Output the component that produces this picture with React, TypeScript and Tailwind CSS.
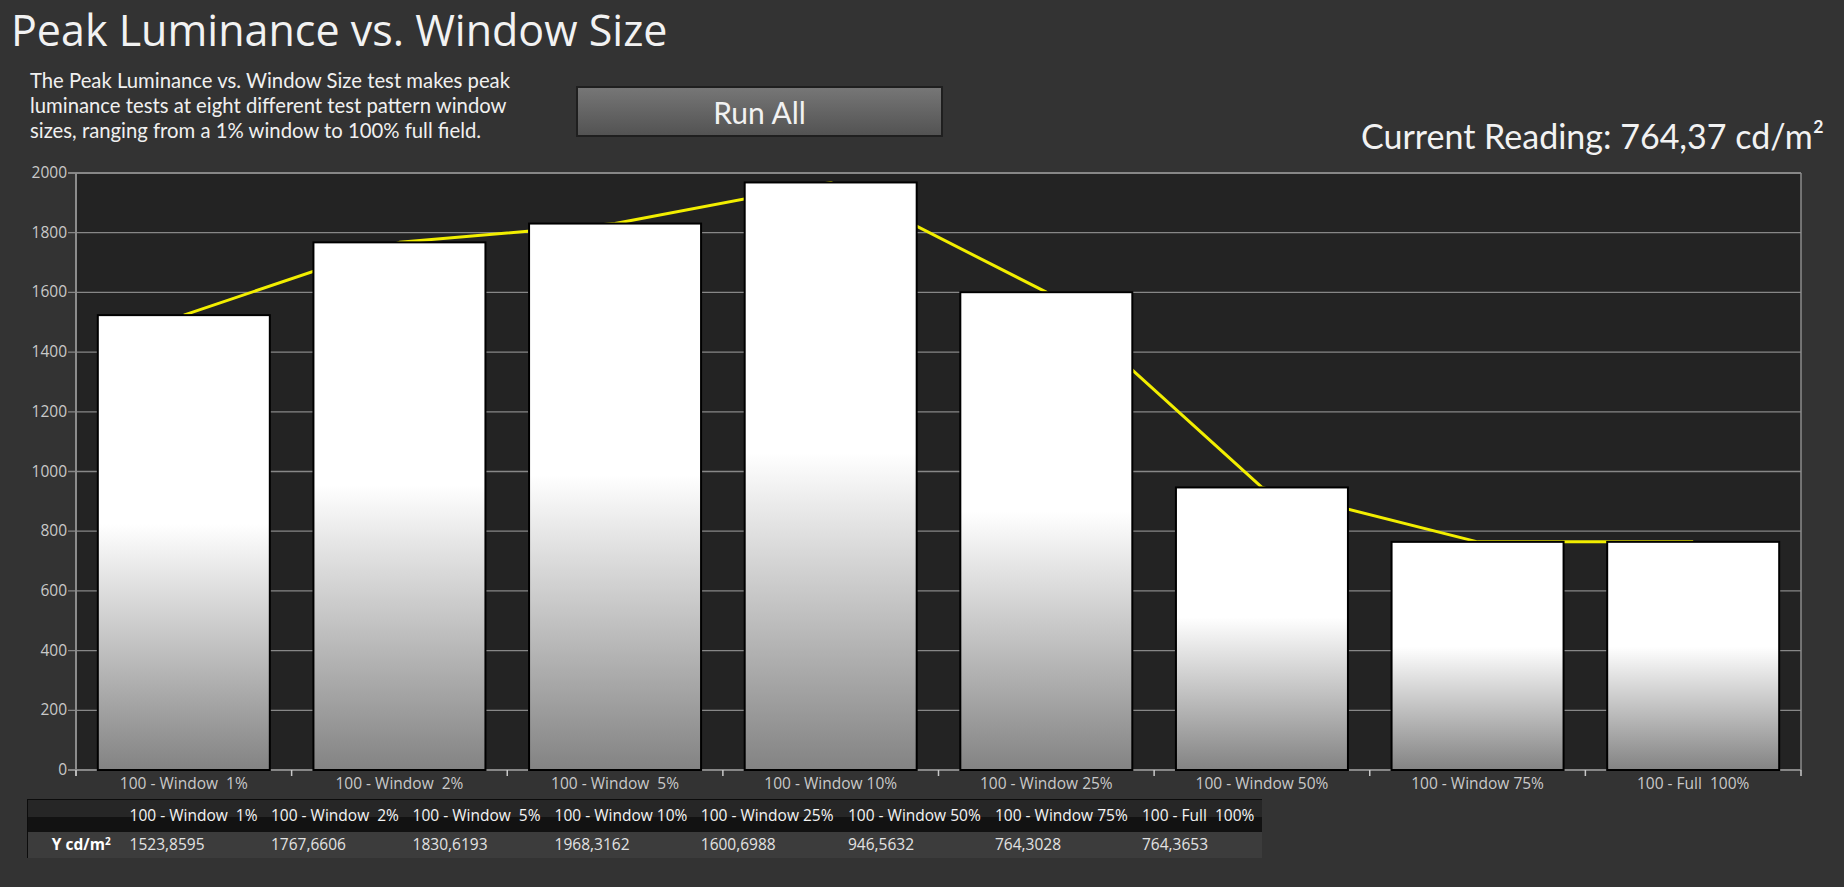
import React from "react";

const categories = [
  "100 - Window  1%",
  "100 - Window  2%",
  "100 - Window  5%",
  "100 - Window 10%",
  "100 - Window 25%",
  "100 - Window 50%",
  "100 - Window 75%",
  "100 - Full  100%",
];

const values = [1523.8595, 1767.6606, 1830.6193, 1968.3162, 1600.6988, 946.5632, 764.3028, 764.3653];

const PLOT_LEFT = 76;
const PLOT_RIGHT = 1801;
const PLOT_TOP = 13;
const PLOT_BOTTOM = 610;
const SLOT = (PLOT_RIGHT - PLOT_LEFT) / 8;
const K = (PLOT_BOTTOM - PLOT_TOP) / 2000;

const centerX = (i: number) => PLOT_LEFT + (i + 0.5) * SLOT;
const valueY = (v: number) => PLOT_BOTTOM - v * K;

const LuminanceChart = () => {
  const ticks = [0, 200, 400, 600, 800, 1000, 1200, 1400, 1600, 1800, 2000];
  const linePoints = values.map((v, i) => `${centerX(i)},${valueY(v)}`).join(" ");

  return (
    <svg width={1844} height={639} viewBox="0 0 1844 639" className="block">
      <defs>
        <linearGradient id="barFill" x1="0" y1="0" x2="0" y2="1">
          <stop offset="0" stopColor="#ffffff" />
          <stop offset="0.46" stopColor="#ffffff" />
          <stop offset="1" stopColor="#838383" />
        </linearGradient>
      </defs>

      <rect x={PLOT_LEFT} y={PLOT_TOP} width={PLOT_RIGHT - PLOT_LEFT} height={PLOT_BOTTOM - PLOT_TOP} fill="#232323" />

      {ticks.map((t) => (
        <g key={t}>
          <line x1={PLOT_LEFT - 8} x2={PLOT_RIGHT} y1={valueY(t)} y2={valueY(t)} stroke="#878787" strokeWidth={t === 2000 || t === 0 ? 2 : 1.3} />
          <text
            x={PLOT_LEFT - 9}
            y={valueY(t) + 5}
            textAnchor="end"
            fill="#c9c9c9"
            fontSize={15.5}
            fontFamily="'Open Sans', 'Noto Sans', sans-serif"
          >
            {t}
          </text>
        </g>
      ))}

      <polyline points={linePoints} fill="none" stroke="#f2ee00" strokeWidth={3} strokeLinejoin="round" />

      {values.map((v, i) => (
        <rect
          key={i}
          x={centerX(i) - 86}
          y={valueY(v)}
          width={172}
          height={v * K}
          fill="url(#barFill)"
          stroke="#000000"
          strokeWidth={2}
        />
      ))}

      <line x1={PLOT_LEFT} x2={PLOT_LEFT} y1={PLOT_TOP} y2={PLOT_BOTTOM + 6} stroke="#8c8c8c" strokeWidth={2} />
      <line x1={PLOT_RIGHT} x2={PLOT_RIGHT} y1={PLOT_TOP} y2={PLOT_BOTTOM} stroke="#8c8c8c" strokeWidth={1.5} />

      {Array.from({ length: 9 }).map((_, i) => (
        <line
          key={i}
          x1={PLOT_LEFT + i * SLOT}
          x2={PLOT_LEFT + i * SLOT}
          y1={PLOT_BOTTOM}
          y2={PLOT_BOTTOM + 6}
          stroke="#c8c8c8"
          strokeWidth={1.5}
        />
      ))}

      {categories.map((c, i) => (
        <text
          key={c}
          x={centerX(i)}
          y={629}
          textAnchor="middle"
          fill="#c9c9c9"
          fontSize={15.5}
          fontFamily="'Open Sans', 'Noto Sans', sans-serif"
          style={{ whiteSpace: "pre" }}
        >
          {c}
        </text>
      ))}
    </svg>
  );
};

const ReadingsTable = () => {
  return (
    <div className="ml-[27px] w-[1235px] border-l border-t border-[#0c0c0c] font-['Open_Sans',sans-serif] text-[15.5px]">
      <div className="grid h-[32px] grid-cols-[101.6px_141.4px_141.6px_142px_146.2px_147.2px_147px_147px_1fr] items-center bg-[linear-gradient(to_bottom,#262626_0%,#262626_52%,#121212_52%,#121212_100%)] text-[#f4f4f4]">
        <div />
        {categories.map((c) => (
          <div key={c} className="whitespace-pre leading-none">
            {c}
          </div>
        ))}
      </div>
      <div className="grid h-[26px] grid-cols-[101.6px_141.4px_141.6px_142px_146.2px_147.2px_147px_147px_1fr] items-center bg-[#3c3c3c] text-[#e2e2e2]">
        <div className="pr-[19px] text-right font-bold leading-none text-white">
          Y cd/m<sup className="text-[10px]">2</sup>
        </div>
        {values.map((v) => (
          <div key={v} className="leading-none">
            {v.toFixed(4).replace(".", ",")}
          </div>
        ))}
      </div>
    </div>
  );
};

const App = () => {
  return (
    <div className="h-[887px] w-[1844px] overflow-hidden bg-[#333333] font-['Lato','Open_Sans',sans-serif] text-[#f2f2f2]">
      <div className="h-[62px] pl-[11px] pt-[8px]">
        <h1 className="font-['Open_Sans',sans-serif] text-[43px] leading-none">Peak Luminance vs. Window Size</h1>
      </div>
      <div className="flex h-[98px] items-start">
        <p className="ml-[30px] mt-[6px] w-[520px] text-[20.3px] leading-[25px] text-[#f0f0f0]">
          The Peak Luminance vs. Window Size test makes peak
          <br />
          luminance tests at eight different test pattern window
          <br />
          sizes, ranging from a 1% window to 100% full field.
        </p>
        <button className="ml-[26px] mt-[24px] flex h-[51px] w-[367px] items-center justify-center border-2 border-[#1f1f1f] bg-[linear-gradient(to_bottom,#767676,#535353)] text-[30px] leading-none text-[#f2f2f2]">
          Run All
        </button>
        <div className="ml-auto mr-[20px] mt-[57px] text-[34px] leading-none">Current Reading: 764,37 cd/m²</div>
      </div>
      <LuminanceChart />
      <ReadingsTable />
    </div>
  );
};

export default App;
